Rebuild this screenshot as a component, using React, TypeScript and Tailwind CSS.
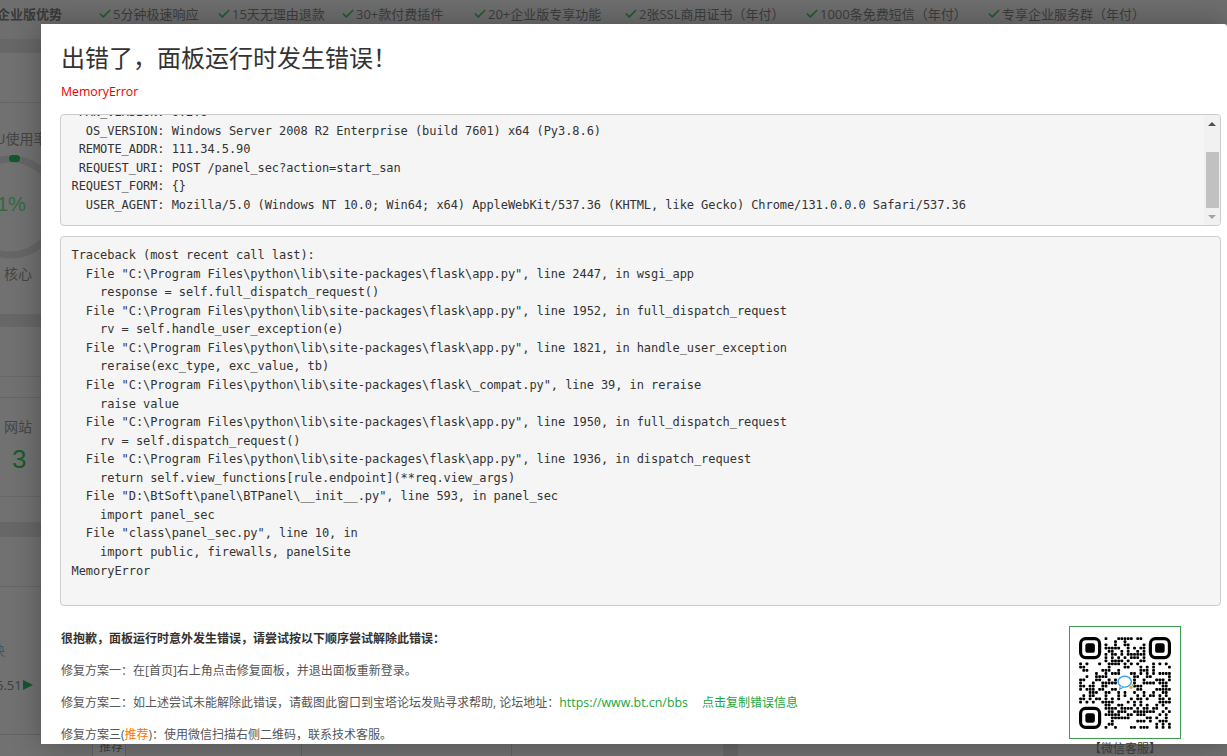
import { Check } from "lucide-react";

const SANS = "font-['Open_Sans','Noto_Sans_CJK_SC',sans-serif]";
const MONO = "font-['DejaVu_Sans_Mono',monospace]";

const perks: [string, string][] = [
  ["5分钟极速响应", "w-[119px]"],
  ["15天无理由退款", "w-[124px]"],
  ["30+款付费插件", "w-[132px]"],
  ["20+企业版专享功能", "w-[151px]"],
  ["2张SSL商用证书（年付）", "w-[181px]"],
  ["1000条免费短信（年付）", "w-[182px]"],
  ["专享企业服务群（年付）", "w-[170px]"],
];

const envLines = [
  " PAN_VERSION: 6.2.6",
  "  OS_VERSION: Windows Server 2008 R2 Enterprise (build 7601) x64 (Py3.8.6)",
  " REMOTE_ADDR: 111.34.5.90",
  " REQUEST_URI: POST /panel_sec?action=start_san",
  "REQUEST_FORM: {}",
  "  USER_AGENT: Mozilla/5.0 (Windows NT 10.0; Win64; x64) AppleWebKit/537.36 (KHTML, like Gecko) Chrome/131.0.0.0 Safari/537.36",
].join("\n");

const trace = `Traceback (most recent call last):
  File "C:\\Program Files\\python\\lib\\site-packages\\flask\\app.py", line 2447, in wsgi_app
    response = self.full_dispatch_request()
  File "C:\\Program Files\\python\\lib\\site-packages\\flask\\app.py", line 1952, in full_dispatch_request
    rv = self.handle_user_exception(e)
  File "C:\\Program Files\\python\\lib\\site-packages\\flask\\app.py", line 1821, in handle_user_exception
    reraise(exc_type, exc_value, tb)
  File "C:\\Program Files\\python\\lib\\site-packages\\flask\\_compat.py", line 39, in reraise
    raise value
  File "C:\\Program Files\\python\\lib\\site-packages\\flask\\app.py", line 1950, in full_dispatch_request
    rv = self.dispatch_request()
  File "C:\\Program Files\\python\\lib\\site-packages\\flask\\app.py", line 1936, in dispatch_request
    return self.view_functions[rule.endpoint](**req.view_args)
  File "D:\\BtSoft\\panel\\BTPanel\\__init__.py", line 593, in panel_sec
    import panel_sec
  File "class\\panel_sec.py", line 10, in
    import public, firewalls, panelSite
MemoryError`;

function qrCells() {
  const cells: [number, number][] = [];
  let s = 0x5a3c91;
  for (let y = 0; y < 29; y++) {
    for (let x = 0; x < 29; x++) {
      s = (s * 1103515245 + 12345) & 0x7fffffff;
      const bit = ((s >> 16) & 7) < 4;
      const finder = (x < 8 && y < 8) || (x > 20 && y < 8) || (x < 8 && y > 20);
      const centre = x > 11 && x < 17 && y > 11 && y < 17;
      if (bit && !finder && !centre) cells.push([x, y]);
    }
  }
  return cells;
}

function Finder({ x, y }: { x: number; y: number }) {
  return (
    <g>
      <rect x={x + 0.5} y={y + 0.5} width={6} height={6} rx={1.6} fill="none" stroke="#000" strokeWidth={1} />
      <rect x={x + 2} y={y + 2} width={3} height={3} rx={0.7} fill="#000" />
    </g>
  );
}

function QrCode() {
  return (
    <svg viewBox="0 0 29 29" className="w-[92px] h-[92px]">
      <Finder x={0} y={0} />
      <Finder x={22} y={0} />
      <Finder x={0} y={22} />
      {qrCells().map(([x, y]) => (
        <rect key={`${x}-${y}`} x={x + 0.06} y={y + 0.06} width={0.88} height={0.88} rx={0.25} fill="#000" />
      ))}
      <ellipse cx={14.4} cy={14.1} rx={2.1} ry={1.7} fill="#fff" stroke="#3f9fe3" strokeWidth={0.45} />
      <path d="M13 15.5l-.2 1 1.2-.7" fill="#fff" stroke="#3f9fe3" strokeWidth={0.35} />
      <circle cx={16.4} cy={15.9} r={0.5} fill="#f2a33a" />
      <circle cx={17} cy={15.2} r={0.4} fill="#7cc576" />
    </svg>
  );
}

function Backdrop() {
  return (
    <div className={`h-[756px] flex flex-col bg-[#717171] text-[#3d3d3d] ${SANS}`}>
      <div className="h-[39px] shrink-0 flex items-start pt-[5px] text-[13px] leading-[18px] bg-[#6e6e6e] whitespace-nowrap">
        <span className="w-[101px] shrink-0 -ml-[3px] font-bold text-[#3a3a3a]">企业版优势</span>
        {perks.map(([t, w]) => (
          <span key={t} className={`${w} shrink-0 flex items-center gap-[1px]`}>
            <Check size={14} strokeWidth={3} className="text-[#1c5f2c] shrink-0" />
            {t}
          </span>
        ))}
      </div>
      <div className="h-[14px] shrink-0 bg-[#676767]" />
      <div className="h-[50px] shrink-0 border-b border-[#666666]" />
      <div className="h-[211px] shrink-0 text-[14px] leading-5 text-[#454545]">
        <div className="mt-[26px] -ml-[22px] whitespace-nowrap">CPU使用率</div>
        <div className="relative mt-[2px] w-[41px] h-[114px] overflow-hidden">
          <svg viewBox="0 0 41 114" className="w-[41px] h-[114px]">
            <circle cx={10} cy={56} r={48} fill="none" stroke="#666666" strokeWidth={7} />
            <rect x={9} y={4} width={11} height={7} rx={3.5} fill="#14572a" />
          </svg>
          <span className="absolute -left-[3px] top-[41px] text-[20px] leading-6 font-['Liberation_Sans',sans-serif] text-[#2f6b3f]">1%</span>
        </div>
        <div className="-mt-[1px] pl-[4px] whitespace-nowrap">核心</div>
      </div>
      <div className="h-[13px] shrink-0 bg-[#676767]" />
      <div className="h-[50px] shrink-0 border-b border-[#666666]" />
      <div className="h-[21px] shrink-0 border-b border-[#666666]" />
      <div className="h-[99px] shrink-0 border-b border-[#666666] flex flex-col pl-[4px]">
        <div className="mt-[19px] text-[14px] leading-5 text-[#454545]">网站</div>
        <div className="mt-[6px] pl-[8px] text-[26px] leading-8 font-['Liberation_Sans',sans-serif] text-[#1a5a2a]">3</div>
      </div>
      <div className="h-[25px] shrink-0" />
      <div className="h-[15px] shrink-0 bg-[#676767]" />
      <div className="h-[50px] shrink-0 border-b border-[#666666]" />
      <div className="h-[147px] shrink-0 text-[13px] leading-5">
        <div className="mt-[53px] -ml-[8px] text-[#3f5560]">决</div>
        <div className="mt-[15px] -ml-[4px] flex items-center gap-[1px] text-[#404040]">
          <span>5.51</span>
          <svg viewBox="0 0 10 10" className="w-[10px] h-[10px]">
            <path d="M0 0l10 5-10 5z" fill="#14572a" />
          </svg>
        </div>
      </div>
      <div className="flex-1 flex border-t border-[#646464] text-[12px] leading-[18px]">
        <div className="w-[93px] shrink-0 border-r border-[#636363]" />
        <div className="w-[33px] shrink-0 border-r border-[#636363] bg-[#767676] pl-[6px] pt-[3px] text-[#404040] overflow-hidden">推荐</div>
        <div className="w-[176px] shrink-0 border-r border-[#636363]" />
        <div className="w-[210px] shrink-0 border-r border-[#636363]" />
        <div className="w-[211px] shrink-0" />
        <div className="w-[15px] shrink-0 bg-[#666666]" />
      </div>
    </div>
  );
}

function Modal() {
  return (
    <div
      className={`absolute left-[41px] top-[24px] w-[1186px] h-[720px] bg-white rounded-tr-[3px] pl-[19px] pr-[6px] shadow-[0_0_30px_rgba(0,0,0,0.3)] ${SANS}`}
    >
      <h1 className="pl-[1px] pt-[17px] text-[24px] leading-[34px] font-normal text-[#333333] whitespace-nowrap">
        出错了，面板运行时发生错误！
      </h1>
      <div className="mt-[8px] pl-[1px] text-[12.3px] leading-[17px] text-[#e60000]">MemoryError</div>
      <div className="relative mt-[14px] h-[112px] overflow-hidden rounded border border-[#cccccc] bg-[#f5f5f5]">
        <pre className={`-mt-[12px] pl-[10.5px] pr-4 text-[12px] leading-[18.57px] tracking-[-0.07px] text-[#333333] ${MONO}`}>
          {envLines}
        </pre>
        <div className="absolute right-0 top-0 bottom-0 w-[16px] bg-[#f1f1f1] flex flex-col items-center">
          <svg viewBox="0 0 8 4" className="mt-[7px] w-[8px] h-[4px]">
            <path d="M4 0l4 4H0z" fill="#505050" />
          </svg>
          <div className="mt-[26px] w-[13px] h-[56px] bg-[#c1c1c1]" />
          <svg viewBox="0 0 8 4" className="mt-[7px] w-[8px] h-[4px]">
            <path d="M0 0h8L4 4z" fill="#a3a3a3" />
          </svg>
        </div>
      </div>
      <pre
        className={`mt-[10px] h-[370px] rounded border border-[#cccccc] bg-[#f5f5f5] pl-[10.5px] pt-[9px] text-[12px] leading-[18.57px] tracking-[-0.07px] text-[#333333] overflow-hidden ${MONO}`}
      >
        {trace}
      </pre>
      <div className="mt-[20px] flex items-start">
        <div className="flex-1 min-w-0 pl-[1px] text-[12px] leading-[17px] text-[#555555] whitespace-nowrap flex flex-col gap-[15px] pt-[4px]">
          <div className="font-bold text-[#333333]">很抱歉，面板运行时意外发生错误，请尝试按以下顺序尝试解除此错误：</div>
          <div>修复方案一：在[首页]右上角点击修复面板，并退出面板重新登录。</div>
          <div>
            修复方案二：如上述尝试未能解除此错误，请截图此窗口到宝塔论坛发贴寻求帮助, 论坛地址：
            <span className="text-[12.4px] text-[#20a53a]">https://www.bt.cn/bbs</span>
            <span className="ml-[14px] text-[#20a53a]">点击复制错误信息</span>
          </div>
          <div>
            修复方案三(<span className="text-[#ff7300]">推荐</span>)：使用微信扫描右侧二维码，联系技术客服。
          </div>
        </div>
        <div className="mr-[40px] shrink-0 flex flex-col items-center">
          <div className="w-[112px] h-[113px] border border-[#3d9a50] flex items-center justify-center">
            <QrCode />
          </div>
          <div className="mt-[1px] text-[12px] leading-[17px] text-[#3a3a3a] whitespace-nowrap">【微信客服】</div>
        </div>
      </div>
    </div>
  );
}

export default function App() {
  return (
    <div className="relative w-[1227px] h-[756px] overflow-hidden">
      <Backdrop />
      <Modal />
    </div>
  );
}
